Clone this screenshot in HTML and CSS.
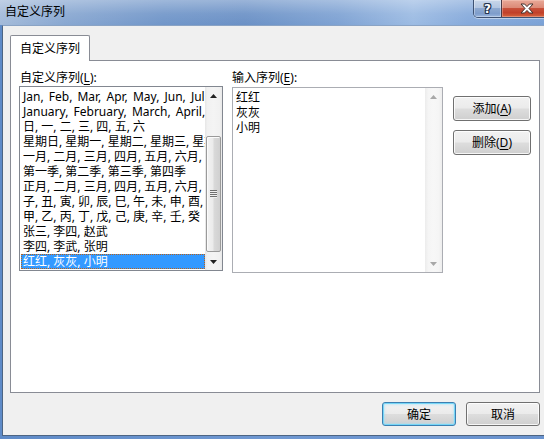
FILE: index.html
```html
<!DOCTYPE html>
<html lang="zh-CN">
<head>
<meta charset="utf-8">
<title>自定义序列</title>
<link rel="stylesheet" href="styles.css">
</head>
<body>
<div class="window">
  <div class="titlebar">
    <span class="title">自定义序列</span>
    <div class="caption-buttons">
      <div class="cap-btn help"><span class="help-glyph">?</span></div>
      <div class="cap-btn close">
        <svg class="close-x" width="14" height="11" viewBox="-1 -1 14 11"><polygon points="0,0 3.6,0 6,2.6 8.4,0 12,0 8,4.5 12,9 8.4,9 6,6.4 3.6,9 0,9 4,4.5" fill="#fff" stroke="#40302c" stroke-width="1" stroke-linejoin="round"/></svg>
      </div>
    </div>
  </div>
  <div class="client">
    <div class="tabs"><div class="tab active">自定义序列</div></div>
    <div class="panel">
      <div class="col col-lists">
        <div class="label label-l">自定义序列(<u>L</u>):</div>
        <div class="listbox">
          <div class="items">
            <div class="item latin">Jan, Feb, Mar, Apr, May, Jun, Jul, Aug, Sep, Oct, Nov, Dec</div>
            <div class="item latin">January, February, March, April, May, June, July</div>
            <div class="item">日, 一, 二, 三, 四, 五, 六</div>
            <div class="item">星期日, 星期一, 星期二, 星期三, 星期四, 星期五, 星期六</div>
            <div class="item">一月, 二月, 三月, 四月, 五月, 六月, 七月, 八月</div>
            <div class="item">第一季, 第二季, 第三季, 第四季</div>
            <div class="item">正月, 二月, 三月, 四月, 五月, 六月, 七月, 八月</div>
            <div class="item">子, 丑, 寅, 卯, 辰, 巳, 午, 未, 申, 酉, 戌, 亥</div>
            <div class="item">甲, 乙, 丙, 丁, 戊, 己, 庚, 辛, 壬, 癸</div>
            <div class="item">张三, 李四, 赵武</div>
            <div class="item">李四, 李武, 张明</div>
            <div class="item selected">红红, 灰灰, 小明</div>
          </div>
          <div class="vscroll">
            <div class="sb-btn"><svg width="7" height="4" viewBox="0 0 7 4"><polygon points="0,4 3.5,0 7,4" fill="#222"/></svg></div>
            <div class="sb-track">
              <div class="sb-thumb"><div class="grip"></div></div>
            </div>
            <div class="sb-btn"><svg width="7" height="4" viewBox="0 0 7 4"><polygon points="0,0 7,0 3.5,4" fill="#222"/></svg></div>
          </div>
        </div>
      </div>
      <div class="col col-input">
        <div class="label">输入序列(<u>E</u>):</div>
        <div class="textarea">
          <div class="ta-text">
            <div class="ta-line">红红</div>
            <div class="ta-line">灰灰</div>
            <div class="ta-line">小明</div>
          </div>
          <div class="vscroll disabled">
            <div class="sb-btn"><svg width="7" height="4" viewBox="0 0 7 4"><polygon points="0,4 3.5,0 7,4" fill="#a8a8a8"/></svg></div>
            <div class="sb-track"></div>
            <div class="sb-btn"><svg width="7" height="4" viewBox="0 0 7 4"><polygon points="0,0 7,0 3.5,4" fill="#a8a8a8"/></svg></div>
          </div>
        </div>
      </div>
      <div class="col col-buttons">
        <button class="btn side">添加(<u>A</u>)</button>
        <button class="btn side">删除(<u>D</u>)</button>
      </div>
    </div>
    <div class="footer">
      <button class="btn foot default">确定</button>
      <button class="btn foot">取消</button>
    </div>
  </div>
</div>
</body>
</html>
```

FILE: styles.css
```css
* { box-sizing: border-box; }
html, body { margin: 0; padding: 0; }
body {
  width: 544px;
  height: 439px;
  overflow: hidden;
  font-family: "Noto Sans", "Noto Sans CJK SC", sans-serif;
  font-size: 12px;
  line-height: 15px;
  color: #000;
  background: #6f97d0;
}
.window {
  width: 544px;
  height: 439px;
  display: flex;
  flex-direction: column;
  overflow: hidden;
  background: linear-gradient(90deg, #5f8bc8 0%, #6f98d2 50%, #6a93cf 100%);
}
.titlebar {
  height: 25px;
  flex: none;
  display: flex;
  align-items: flex-start;
  background:
    linear-gradient(180deg, rgba(255,255,255,0.32) 0%, rgba(255,255,255,0.08) 55%, rgba(255,255,255,0) 100%),
    linear-gradient(90deg, #a3bad9 0%, #88a7d1 12%, #7196c9 30%, #6b91c6 45%, #7ea2d3 62%, #9cbbe3 76%, #86aadb 86%, #7aa1d6 100%);
}
.title {
  flex: 1;
  padding-left: 5px;
  line-height: 24px;
  font-size: 12px;
  color: #000;
}
.caption-buttons {
  display: flex;
  height: 18px;
  margin-right: -4px;
  border: 1px solid #3e5273;
  border-top: none;
  border-radius: 0 0 5px 5px;
  overflow: hidden;
  box-shadow: 0 1px 0 rgba(255,255,255,0.45);
}
.cap-btn {
  height: 17px;
  display: flex;
  align-items: center;
  justify-content: center;
}
.help {
  width: 27px;
  background: linear-gradient(180deg, #c9d7ea 0%, #b3c6e1 45%, #8ea9d0 50%, #7e9dcb 80%, #9ab6de 100%);
  box-shadow: inset 0 0 0 1px rgba(255,255,255,0.35);
}
.help-glyph {
  font-family: "DejaVu Sans", sans-serif;
  font-weight: bold;
  font-size: 12px;
  line-height: 12px;
  color: #fff;
  text-shadow: 1px 0 0 #24344f, -1px 0 0 #24344f, 0 1px 0 #24344f, 0 -1px 0 #24344f,
    1px 1px 0 #24344f, -1px -1px 0 #24344f, 1px -1px 0 #24344f, -1px 1px 0 #24344f;
}
.close {
  width: 46px;
  border-left: 1px solid #4a3a44;
  background: linear-gradient(180deg, #e8a998 0%, #dc8a77 45%, #c7503a 50%, #c1402a 75%, #d5653f 100%);
  box-shadow: inset 0 0 0 1px rgba(255,220,210,0.35);
  justify-content: flex-start;
  padding-left: 18px;
}
.close-x { display: block; }

.client {
  flex: 1;
  margin: 0 0 3px 2px;
  border-left: 1px solid #4d6583;
  border-bottom: 1px solid #4d6583;
  border-top: 1px solid #8aa3c4;
  background: #f0f0f0;
  display: flex;
  flex-direction: column;
  padding: 9px 0 0 7px;
}
.tabs {
  height: 25px;
  display: flex;
  align-items: flex-end;
}
.tab {
  position: relative;
  z-index: 1;
  width: 80px;
  height: 26px;
  margin-bottom: -1px;
  background: #fff;
  border: 1px solid #898c95;
  border-bottom: none;
  border-radius: 2px 2px 0 0;
  padding: 5px 0 0 9px;
  line-height: 15px;
}
.panel {
  width: 530px;
  height: 333px;
  border: 1px solid #898c95;
  background: #fff;
  display: flex;
  align-items: flex-start;
  padding: 9px 0 0 8px;
}
.col { display: flex; flex-direction: column; }
.col-lists { width: 204px; }
.label { height: 15px; line-height: 15px; white-space: nowrap; }
.label-l { padding-left: 1px; }
.col-input { width: 211px; margin-left: 9px; }
.col-buttons { width: 78px; margin-left: 10px; padding-top: 26px; gap: 9px; }

.listbox {
  margin-top: 1px;
  height: 185px;
  border: 1px solid #828790;
  background: #fff;
  display: flex;
}
.items {
  width: 185px;
  padding: 2px 0 0 1px;
  overflow: hidden;
}
.item {
  height: 15px;
  line-height: 15px;
  white-space: nowrap;
  overflow: hidden;
  padding-left: 2px;
}
.item.latin { font-size: 12px; word-spacing: 2px; }
.item.selected {
  background: #3399ff;
  color: #fff;
  outline: 1px dotted #b8621c;
  outline-offset: -1px;
}
.vscroll {
  width: 17px;
  flex: none;
  display: flex;
  flex-direction: column;
  background: linear-gradient(90deg, #e6e6e6 0%, #f1f1f1 15%, #f4f4f4 50%, #f1f1f1 85%, #e8e8e8 100%);
}
.sb-btn {
  height: 17px;
  flex: none;
  display: flex;
  align-items: center;
  justify-content: center;
}
.sb-track { flex: 1; }
.sb-thumb {
  margin: 32px 1px 0 1px;
  height: 116px;
  border: 1px solid #9a9a9a;
  border-radius: 2px;
  background: linear-gradient(90deg, #f3f3f3 0%, #ebebeb 45%, #d9d9d9 55%, #d0d0d0 100%);
  box-shadow: inset 1px 1px 0 #fbfbfb;
  display: flex;
  align-items: center;
  justify-content: center;
}
.grip {
  width: 7px;
  height: 8px;
  background: repeating-linear-gradient(180deg, #707070 0 1px, #f0f0f0 1px 2px);
}
.vscroll.disabled {
  background: linear-gradient(90deg, #ececec 0%, #f5f5f5 20%, #f7f7f7 50%, #f5f5f5 80%, #ededed 100%);
}

.textarea {
  margin-top: 2px;
  height: 186px;
  border: 1px solid #abadb3;
  background: #fff;
  display: flex;
}
.ta-text {
  flex: 1;
  padding: 2px 0 0 3px;
}
.ta-line { height: 15px; line-height: 15px; }

.btn {
  font-family: "Noto Sans", "Noto Sans CJK SC", sans-serif;
  font-size: 12px;
  line-height: 15px;
  color: #000;
  padding: 0;
  border: 1px solid #707070;
  border-radius: 3px;
  background: linear-gradient(180deg, #f2f2f2 0%, #ebebeb 48%, #dddddd 52%, #cfcfcf 100%);
  box-shadow: inset 0 0 0 1px rgba(255,255,255,0.8);
  display: flex;
  align-items: center;
  justify-content: center;
}
.btn.side { width: 78px; height: 25px; }
.footer {
  display: flex;
  justify-content: flex-end;
  gap: 10px;
  margin-top: 9px;
  padding-right: 4px;
}
.btn.foot { width: 74px; height: 24px; }
.btn.default {
  border-color: #3c7fb1;
  box-shadow: inset 0 0 0 1px #76d6f7, inset 0 0 2px 2px rgba(150,225,250,0.45);
}
u { text-decoration: underline; text-underline-offset: 2px; }
```
